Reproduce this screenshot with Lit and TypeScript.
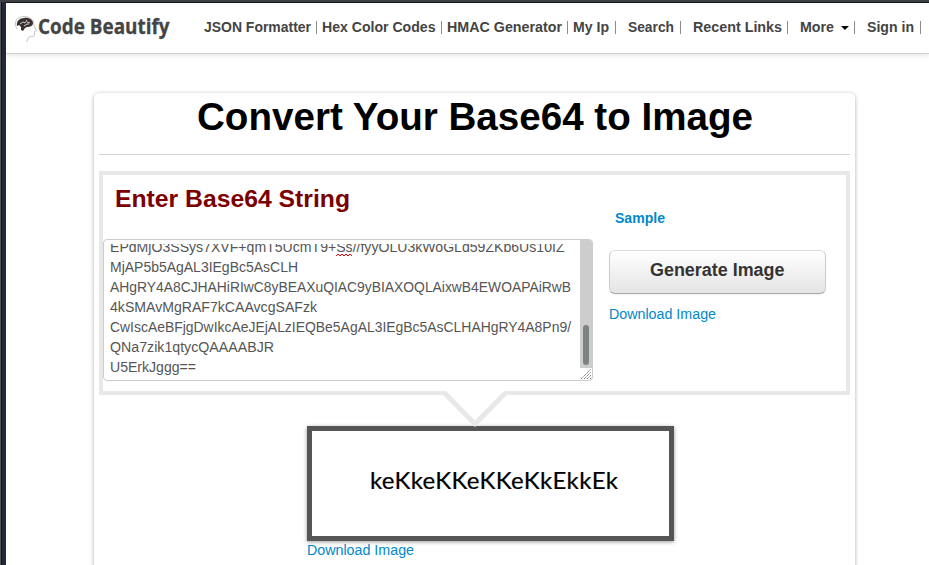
import { LitElement, html, css, svg } from "lit";
import { customElement } from "lit/decorators.js";

@customElement("site-header")
class SiteHeader extends LitElement {
  static styles = css`
    :host {
      display: flex;
      height: 51px;
      flex: none;
      box-sizing: border-box;
      border-bottom: 1px solid #cfcfcf;
      box-shadow: 0 1px 5px rgba(0, 0, 0, 0.12);
      font: bold 14px/20px "Liberation Sans", Arial, sans-serif;
      color: #444;
      white-space: nowrap;
    }
    .brand {
      display: flex;
      width: 198px;
      padding-left: 8px;
      box-sizing: border-box;
    }
    .head {
      width: 24px;
      height: 30px;
      margin-top: 9px;
      flex: none;
    }
    .word {
      width: 134px;
      height: 40px;
      margin-top: 3px;
      overflow: visible;
      font: bold 20.5px "Open Sans", "Noto Sans", sans-serif;
      fill: #444;
      stroke: #444;
      stroke-width: 0.3px;
    }
    nav {
      display: flex;
      padding-top: 14px;
    }
    .item {
      display: flex;
      flex: none;
    }
    .label {
      height: 20px;
      flex: none;
      fill: #444;
    }
    .bar {
      width: 1.4px;
      height: 13px;
      margin-top: 4px;
      margin-left: auto;
      background: #8b8b8b;
    }
    .caret {
      margin: 9px 0 0 6px;
      width: 8px;
      height: 4px;
      background: #000;
      clip-path: polygon(0 0, 100% 0, 50% 100%);
    }
  `;

  // label, label width, distance to the separator, gap after it
  private items: [string, number, number, number][] = [
    ["JSON Formatter", 107, 113.3, 4.7],
    ["Hex Color Codes", 113.5, 120.3, 4.7],
    ["HMAC Generator", 115, 121.3, 4.7],
    ["My Ip", 36, 43.3, 11.7],
    ["Search", 46, 53.3, 11.7],
    ["Recent Links", 89, 95.3, 11.7],
    ["More", 34, 55.3, 11.7],
    ["Sign in", 47, 54.3, 4],
  ];

  render() {
    return html`
      <div class="brand">
        <svg class="head" viewBox="0 0 24 30">
          <path d="M3 17C-1 10 3 4.500 10 4.500c7 0 10 4 10 9l2.500 5-2 1v4c-1 2-4 0-6 2l-2 5" fill="none" stroke="#c6c6c6" stroke-width="1"/>
          <path d="M3 14C2 9 6 6 10 6c5-1 9 2 9 5 0 3-3 4-6 4l-2 1-2 3-2-1 0-3-2-2z" fill="#3a3130"/>
          <path d="M6 12l3-2 2 1 2-3M10 14l3-2 2 0M13 10l3 1" fill="none" stroke="#ddd" stroke-width=".9"/>
        </svg>
        <svg class="word"><text x="0" y="27.500" textLength="131.500" lengthAdjust="spacingAndGlyphs">Code Beautify</text></svg>
      </div>
      <nav>
        ${this.items.map(
          ([t, w, d, gap]) => html`
            <div class="item" style="width:${d}px;margin-right:${gap}px">
              <svg class="label" width=${w + 1} height="20">
                <text x="0" y="15" textLength=${w} lengthAdjust="spacingAndGlyphs">${t}</text>
              </svg>
              ${t === "More" ? html`<span class="caret"></span>` : ""}
              <span class="bar"></span>
            </div>`
        )}
      </nav>`;
  }
}

@customElement("base64-field")
class Base64Field extends LitElement {
  static styles = css`
    :host {
      display: flex;
      width: 490px;
      height: 142px;
      box-sizing: border-box;
      border: 1px solid #ccc;
      border-radius: 4px;
      overflow: hidden;
      background: #fff;
    }
    .text {
      width: 476px;
      height: 132px;
      margin-top: 4px;
      font: 14px "Liberation Sans", Arial, sans-serif;
      fill: #555;
      flex: none;
    }
    .side {
      flex: 1;
      display: flex;
      flex-direction: column;
    }
    .track {
      flex: 1;
      display: flex;
      align-items: flex-end;
      justify-content: center;
      background: #cdcdcd;
    }
    .thumb {
      width: 6px;
      height: 40px;
      margin-bottom: 3px;
      border-radius: 3px;
      background: #7d8282;
    }
    .grip {
      height: 12px;
      width: 12px;
    }
  `;

  private lines: [string, number][] = [
    ["EPdMjO3SSys7XVF+qmT5UcmT9+Ss//fyyOLU3kWoGLd59ZKb6Us10IZ", 454.5],
    ["MjAP5b5AgAL3IEgBc5AsCLH", 188],
    ["AHgRY4A8CJHAHiRIwC8yBEAXuQIAC9yBIAXOQLAixwB4EWOAPAiRwB", 461],
    ["4kSMAvMgRAF7kCAAvcgSAFzk", 207],
    ["CwIscAeBFjgDwIkcAeJEjALzIEQBe5AgAL3IEgBc5AsCLHAHgRY4A8Pn9/", 461],
    ["QNa7zik1qtycQAAAABJR", 164],
    ["U5ErkJggg==", 86],
  ];

  render() {
    return html`
      <svg class="text">
        ${this.lines.map(
          ([t, w], i) => svg`<text x="6" y=${8 + i * 20} textLength=${w} lengthAdjust="spacingAndGlyphs">${t}</text>`
        )}
        <path d="M232 12l2-2 2 2 2-2 2 2 2-2 2 2 2-2 2 2" fill="none" stroke="#f00" stroke-width="1"/>
      </svg>
      <div class="side">
        <div class="track"><div class="thumb"></div></div>
        <svg class="grip" viewBox="0 0 12 12">
          <path d="M1 11L11 1M4 11L11 4M7 11l4-4M10 11l1-1" stroke="#777" stroke-dasharray="1.4 .6"/>
        </svg>
      </div>`;
  }
}

@customElement("app-root")
class AppRoot extends LitElement {
  static styles = css`
    :host {
      display: flex;
      width: 929px;
      height: 565px;
      box-sizing: border-box;
      border-top: 2px solid #3d4047;
      overflow: hidden;
      background: #fff;
      font: 14px/20px "Liberation Sans", Arial, sans-serif;
      color: #333;
    }
    .edge {
      width: 6px;
      flex: none;
      background: linear-gradient(90deg, #55565a 1px, #14151b 1px 2px, #24283a 2px);
    }
    .page {
      flex: 1;
      min-width: 0;
      border-top: 1px solid #14161b;
      display: flex;
      flex-direction: column;
    }
    .card {
      width: 761px;
      height: 500px;
      flex: none;
      box-sizing: border-box;
      margin: 39px 0 0 88px;
      padding: 0 5px;
      border-radius: 5px;
      box-shadow: 0 1px 4px rgba(0, 0, 0, 0.32);
    }
    svg {
      display: block;
    }
    .title {
      width: 100%;
      height: 61px;
      font-size: 38.5px;
      font-weight: bold;
      fill: #000;
    }
    .rule {
      height: 1px;
      background: #d0d0d0;
    }
    .panel {
      display: flex;
      height: 224px;
      margin-top: 16px;
      box-sizing: border-box;
      border: 4px solid #e8e8e8;
    }
    .entry {
      width: 506px;
      flex: none;
    }
    .subtitle {
      width: 300px;
      height: 64px;
      font-size: 24.5px;
      font-weight: bold;
      fill: #7b0000;
    }
    .actions {
      padding-top: 33px;
    }
    .link {
      width: 110px;
      height: 20px;
      fill: #0088cc;
    }
    .sample {
      margin-left: 6px;
      font-weight: bold;
    }
    .button {
      display: flex;
      justify-content: center;
      width: 217px;
      height: 44px;
      margin: 22px 0 10px;
      padding: 0;
      box-sizing: border-box;
      border: 1px solid #ccc;
      border-color: #dcdcdc #ccc #aaa;
      border-radius: 6px;
      background: linear-gradient(#fff, #e4e4e4);
      box-shadow: 0 1px 2px rgba(0, 0, 0, 0.06);
    }
    .button svg {
      width: 136px;
      height: 40px;
      font: bold 17.5px "Liberation Sans", Arial, sans-serif;
      fill: #333;
    }
    .arrow {
      position: relative;
      z-index: 1;
      width: 66px;
      height: 36px;
      margin: -4px 0 0 343px;
    }
    .output {
      width: 367px;
      height: 115px;
      box-sizing: border-box;
      margin: -1px 0 0 208px;
      border: 5px solid #555;
      box-shadow: 0 1px 4px rgba(0, 0, 0, 0.4);
    }
    .output svg {
      width: 357px;
      height: 105px;
      font: 24px Lato, sans-serif;
      fill: #000;
      stroke: #000;
      stroke-width: 0.2px;
    }
    .below {
      margin: -1px 0 0 208px;
    }
  `;

  private download(extra = "") {
    return html`<svg class="link ${extra}"><text x="0" y="15" textLength="107" lengthAdjust="spacingAndGlyphs">Download Image</text></svg>`;
  }

  render() {
    return html`
      <div class="edge"></div>
      <div class="page">
        <site-header></site-header>
        <main class="card">
          <svg class="title"><text x="98" y="37" textLength="556" lengthAdjust="spacingAndGlyphs">Convert Your Base64 to Image</text></svg>
          <div class="rule"></div>
          <section class="panel">
            <div class="entry">
              <svg class="subtitle"><text x="12" y="32" textLength="235" lengthAdjust="spacingAndGlyphs">Enter Base64 String</text></svg>
              <base64-field></base64-field>
            </div>
            <div class="actions">
              <svg class="link sample"><text x="0" y="15" textLength="50" lengthAdjust="spacingAndGlyphs">Sample</text></svg>
              <button class="button">
                <svg><text x="0" y="25" textLength="134.500" lengthAdjust="spacingAndGlyphs">Generate Image</text></svg>
              </button>
              ${this.download()}
            </div>
          </section>
          <svg class="arrow" viewBox="0 0 66 36">
            <path d="M2 0H64L33 33z" fill="#fff"/>
            <path d="M1 0H4L33 29.500 62 0H65V4L34 35.500H32L1 4z" fill="#e8e8e8"/>
          </svg>
          <div class="output">
            <svg><text x="58" y="58" textLength="248" lengthAdjust="spacing">keKkeKKeKKeKkEkkEk</text></svg>
          </div>
          ${this.download("below")}
        </main>
      </div>`;
  }
}
